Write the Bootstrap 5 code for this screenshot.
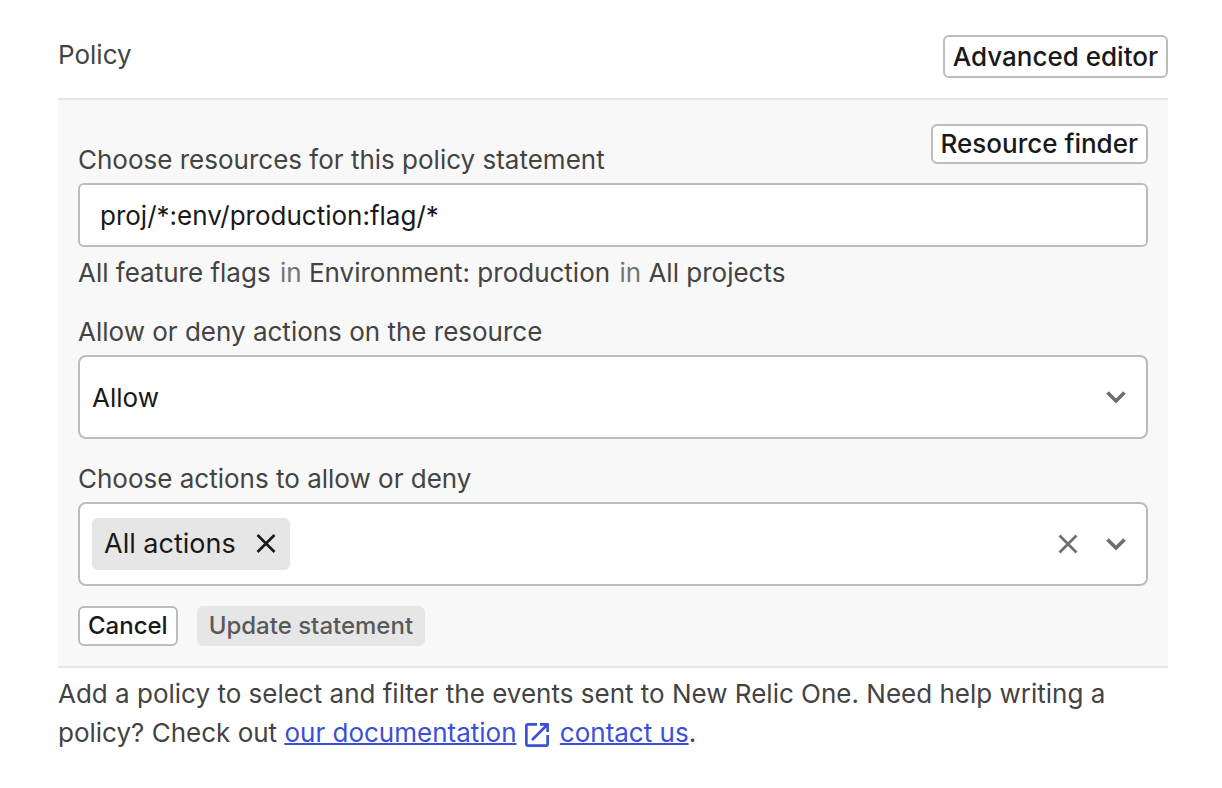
<!DOCTYPE html>
<html lang="en">
<head>
<meta charset="utf-8">
<meta name="viewport" content="width=device-width, initial-scale=1">
<title>Policy</title>
<link href="https://cdn.jsdelivr.net/npm/bootstrap@5.3.0/dist/css/bootstrap.min.css" rel="stylesheet">
<style>
body{font-family:Inter,sans-serif;font-size:26px;line-height:32px;color:#434343;background:#fff}
.policy{padding:35px 54px 35px 58px}
.policy-head{padding-bottom:20px;line-height:40px}
.statement{background:#f8f8f8;border-top:2px solid #e6e6e6;border-bottom:2px solid #e6e6e6;padding:24px 20px 20px}
.field-label{display:block;margin-bottom:7px}
.btn-line{--bs-btn-color:#191919;--bs-btn-bg:#fff;--bs-btn-border-color:#bcbcbc;--bs-btn-hover-bg:#f7f7f7;--bs-btn-hover-border-color:#999;font-size:26px;line-height:36px;font-weight:500;padding:0 8px;border-width:2px;border-radius:6px}
.btn-tall{line-height:39px}
.btn-small{font-size:24px}
.btn-update,.btn-update:disabled{background:#e6e6e6;border-color:#e6e6e6;color:#58595b;opacity:1;padding:0 10px}
.field{border:2px solid #bcbcbc;border-radius:6px;background-color:#fff;color:#191919;font-size:26px}
.field-text{height:64px;padding:0 20px}
.field-tall{height:84px;padding:0 20px 0 12px;border-radius:8px}
.field-icons{color:#6d6e70;gap:28px}
.select-icon{position:absolute;right:22px;top:32px;color:#6d6e70;pointer-events:none}
.tag{background:#e6e6e6;border-radius:6px;height:52px;padding:0 14px 0 12px;gap:20px;font-size:27px}
.tag-input{min-width:0;border:0;outline:0;background:none}
.plain{border:0;background:none;padding:0;display:flex;color:inherit}
.hint{margin:10px 0 27px}
.muted{color:#737476;margin-left:2px}
.actions-row{gap:19px;margin-top:20px}
.help{margin:6px 0 0;line-height:39px}
.help a{color:#3b4fd8;text-decoration-thickness:2px}
svg{display:block;fill:none;stroke:currentColor}
.help svg{display:inline-block;margin:0 4px 0 8px;vertical-align:-5px}
</style>
</head>
<body>
<main class="policy">
<header class="policy-head d-flex justify-content-between">
<span>Policy</span>
<button type="button" class="btn btn-line btn-tall">Advanced editor</button>
</header>
<form class="statement">
<div class="d-flex justify-content-between">
<label for="resources" class="field-label align-self-end mt-3 pt-1">Choose resources for this policy statement</label>
<button type="button" class="btn btn-line align-self-start">Resource finder</button>
</div>
<input type="text" id="resources" class="form-control field field-text" value="proj/*:env/production:flag/*">
<p class="hint">All feature flags <span class="muted">in</span> Environment: production <span class="muted">in</span> All projects</p>

<label for="effect" class="field-label">Allow or deny actions on the resource</label>
<div class="position-relative mb-4">
<select id="effect" class="form-control field field-tall"><option>Allow</option><option>Deny</option></select>
<svg class="select-icon" width="20" height="20" viewBox="0 0 20 20" stroke-width="3.6" aria-hidden="true"><path d="M1.500 5.500 10 14l8.500-8.500"/></svg>
</div>

<label for="actions" class="field-label">Choose actions to allow or deny</label>
<div class="field field-tall d-flex align-items-center">
<span class="tag d-flex align-items-center">All actions
<button type="button" class="plain" aria-label="Remove All actions"><svg width="20" height="20" viewBox="0 0 20 20" stroke-width="2.600"><path d="M1.500 1l17 17M18.500 1l-17 17"/></svg></button>
</span>
<input type="text" id="actions" class="tag-input flex-grow-1">
<div class="field-icons d-flex">
<button type="button" class="plain" aria-label="Clear actions"><svg width="20" height="20" viewBox="0 0 20 20" stroke-width="2.600"><path d="M1.500 1.500l17 17M18.500 1.500l-17 17"/></svg></button>
<button type="button" class="plain" aria-label="Show actions"><svg width="20" height="20" viewBox="0 0 20 20" stroke-width="3.600"><path d="M1.500 5.500 10 14l8.500-8.500"/></svg></button>
</div>
</div>

<div class="actions-row d-flex">
<button type="button" class="btn btn-line btn-small">Cancel</button>
<button type="submit" class="btn btn-line btn-small btn-update" disabled>Update statement</button>
</div>
</form>
<p class="help">Add a policy to select and filter the events sent to New Relic One. Need help writing a policy? Check out <a href="#documentation">our documentation<svg width="24" height="24" viewBox="0 0 24 24" stroke-width="2.700" stroke-linejoin="round" aria-hidden="true"><path d="M12 1.350H3Q1.350 1.350 1.350 3v18q0 1.650 1.650 1.650h18q1.650 0 1.650-1.650V12M15 1.350h7.650V9M22 2 7 17"/></svg></a> <a href="#contact">contact us</a>.</p>
</main>
<script src="https://cdn.jsdelivr.net/npm/bootstrap@5.3.0/dist/js/bootstrap.bundle.min.js"></script>
</body>
</html>
